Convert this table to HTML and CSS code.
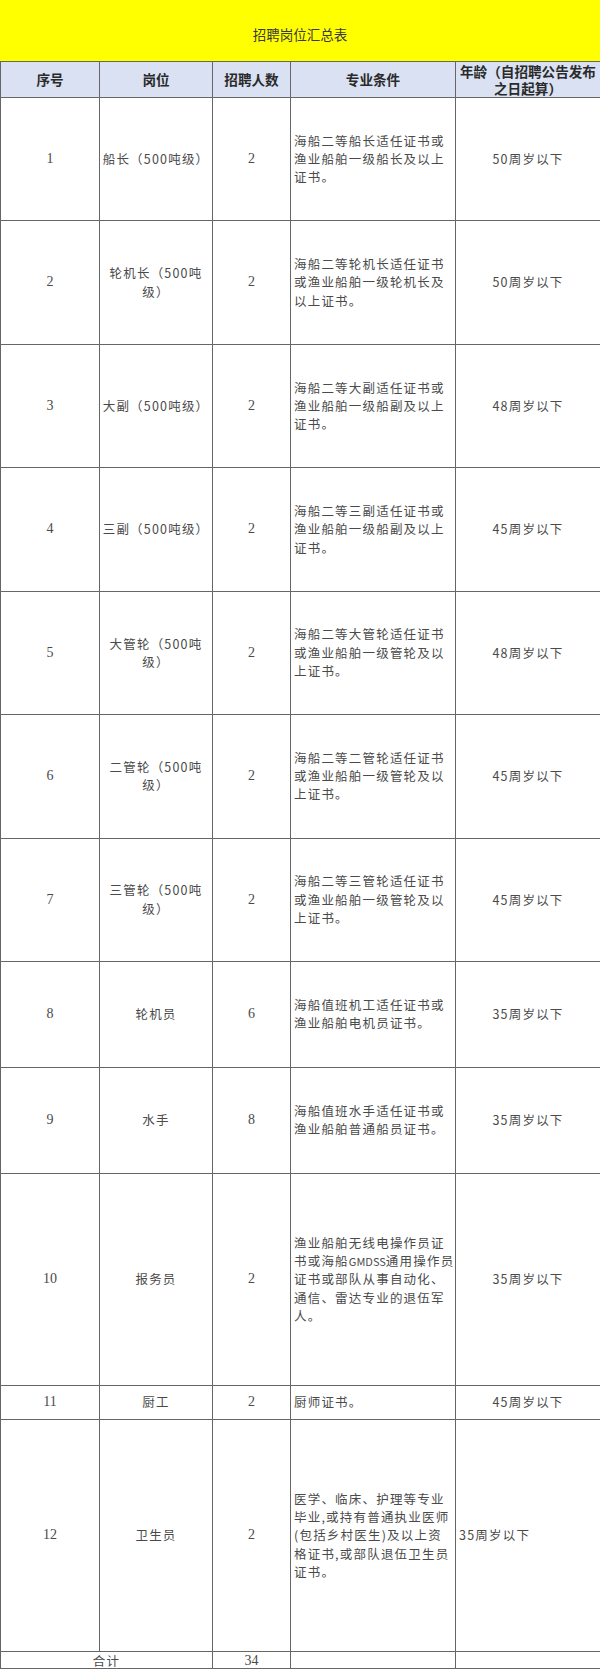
FILE: index.html
```html
<!DOCTYPE html>
<html lang="zh-CN">
<head>
<meta charset="utf-8">
<title>招聘岗位汇总表</title>
<link rel="stylesheet" href="styles.css">
</head>
<body>
<div class="sheet">
  <div class="title">招聘岗位汇总表</div>
  <table class="jobs">
    <colgroup>
      <col class="c-no">
      <col class="c-pos">
      <col class="c-num">
      <col class="c-req">
      <col class="c-age">
    </colgroup>
    <thead>
      <tr class="r-head">
        <th>序号</th>
        <th>岗位</th>
        <th>招聘人数</th>
        <th>专业条件</th>
        <th>年龄（自招聘公告发布之日起算）</th>
      </tr>
    </thead>
    <tbody>
      <tr class="r-a">
        <td class="no">1</td>
        <td class="pos">船长（500吨级）</td>
        <td class="num">2</td>
        <td class="req">海船二等船长适任证书或渔业船舶一级船长及以上证书。</td>
        <td class="age">50周岁以下</td>
      </tr>
      <tr class="r-a">
        <td class="no">2</td>
        <td class="pos">轮机长（500吨级）</td>
        <td class="num">2</td>
        <td class="req">海船二等轮机长适任证书或渔业船舶一级轮机长及以上证书。</td>
        <td class="age">50周岁以下</td>
      </tr>
      <tr class="r-a">
        <td class="no">3</td>
        <td class="pos">大副（500吨级）</td>
        <td class="num">2</td>
        <td class="req">海船二等大副适任证书或渔业船舶一级船副及以上证书。</td>
        <td class="age">48周岁以下</td>
      </tr>
      <tr class="r-a">
        <td class="no">4</td>
        <td class="pos">三副（500吨级）</td>
        <td class="num">2</td>
        <td class="req">海船二等三副适任证书或渔业船舶一级船副及以上证书。</td>
        <td class="age">45周岁以下</td>
      </tr>
      <tr class="r-a">
        <td class="no">5</td>
        <td class="pos">大管轮（500吨级）</td>
        <td class="num">2</td>
        <td class="req">海船二等大管轮适任证书或渔业船舶一级管轮及以上证书。</td>
        <td class="age">48周岁以下</td>
      </tr>
      <tr class="r-a">
        <td class="no">6</td>
        <td class="pos">二管轮（500吨级）</td>
        <td class="num">2</td>
        <td class="req">海船二等二管轮适任证书或渔业船舶一级管轮及以上证书。</td>
        <td class="age">45周岁以下</td>
      </tr>
      <tr class="r-a">
        <td class="no">7</td>
        <td class="pos">三管轮（500吨级）</td>
        <td class="num">2</td>
        <td class="req">海船二等三管轮适任证书或渔业船舶一级管轮及以上证书。</td>
        <td class="age">45周岁以下</td>
      </tr>
      <tr class="r-b">
        <td class="no">8</td>
        <td class="pos">轮机员</td>
        <td class="num">6</td>
        <td class="req">海船值班机工适任证书或渔业船舶电机员证书。</td>
        <td class="age">35周岁以下</td>
      </tr>
      <tr class="r-b">
        <td class="no">9</td>
        <td class="pos">水手</td>
        <td class="num">8</td>
        <td class="req">海船值班水手适任证书或渔业船舶普通船员证书。</td>
        <td class="age">35周岁以下</td>
      </tr>
      <tr class="r-c">
        <td class="no">10</td>
        <td class="pos">报务员</td>
        <td class="num">2</td>
        <td class="req">渔业船舶无线电操作员证<span class="keep">书或海船<span class="latin">GMDSS</span>通用操作员</span>证书或部队从事自动化、通信、雷达专业的退伍军人。</td>
        <td class="age">35周岁以下</td>
      </tr>
      <tr class="r-d">
        <td class="no">11</td>
        <td class="pos">厨工</td>
        <td class="num">2</td>
        <td class="req">厨师证书。</td>
        <td class="age">45周岁以下</td>
      </tr>
      <tr class="r-e">
        <td class="no">12</td>
        <td class="pos">卫生员</td>
        <td class="num">2</td>
        <td class="req">医学、临床、护理等专业毕业,或持有普通执业医师(包括乡村医生)及以上资格证书,或部队退伍卫生员证书。</td>
        <td class="age age-left">35周岁以下</td>
      </tr>
      <tr class="r-total">
        <td class="pos" colspan="2">合计</td>
        <td class="num">34</td>
        <td></td>
        <td></td>
      </tr>
    </tbody>
  </table>
</div>
</body>
</html>
```

FILE: styles.css
```css
* {
  box-sizing: border-box;
}

body {
  margin: 0;
  background: #ffffff;
  font-family: "Noto Sans CJK SC", "Noto Sans", sans-serif;
  color: #4a4a4a;
}

.sheet {
  width: 600px;
}

.title {
  height: 61px;
  background: #ffff00;
  display: flex;
  align-items: center;
  justify-content: center;
  padding-top: 6px;
  font-size: 13.5px;
  color: #3a3a3a;
}

.jobs {
  width: 600px;
  border-collapse: collapse;
  table-layout: fixed;
}

.c-no { width: 99px; }
.c-pos { width: 113px; }
.c-num { width: 78px; }
.c-req { width: 165px; }
.c-age { width: 145px; }

.jobs th,
.jobs td {
  border: 1px solid #666666;
  text-align: center;
  vertical-align: middle;
}

.jobs th {
  background: #d9e1f2;
  font-weight: bold;
  font-size: 13.6px;
  line-height: 17px;
  color: #2a2a2a;
  padding: 0 1px;
}

.jobs td {
  font-size: 12.5px;
  letter-spacing: 1.2px;
  line-height: 18.3px;
  padding: 0 1px;
}

.jobs td.no,
.jobs td.num {
  font-family: "Liberation Serif", "Noto Sans CJK SC", serif;
  font-size: 14px;
  letter-spacing: 0;
}

.jobs td.req {
  text-align: left;
  padding: 0 0 0 3px;
}

.keep {
  white-space: nowrap;
}

.latin {
  font-size: 11px;
  letter-spacing: 0;
}

.jobs td.age-left {
  text-align: left;
  padding-left: 3px;
}

.r-head { height: 36px; }
.r-a { height: 123.43px; }
.r-b { height: 106px; }
.r-c { height: 212px; }
.r-d { height: 34px; }
.r-e { height: 232px; }

.r-total { height: 16px; }

.jobs .r-total td {
  line-height: 14px;
  padding-top: 2px;
  vertical-align: top;
}
```
